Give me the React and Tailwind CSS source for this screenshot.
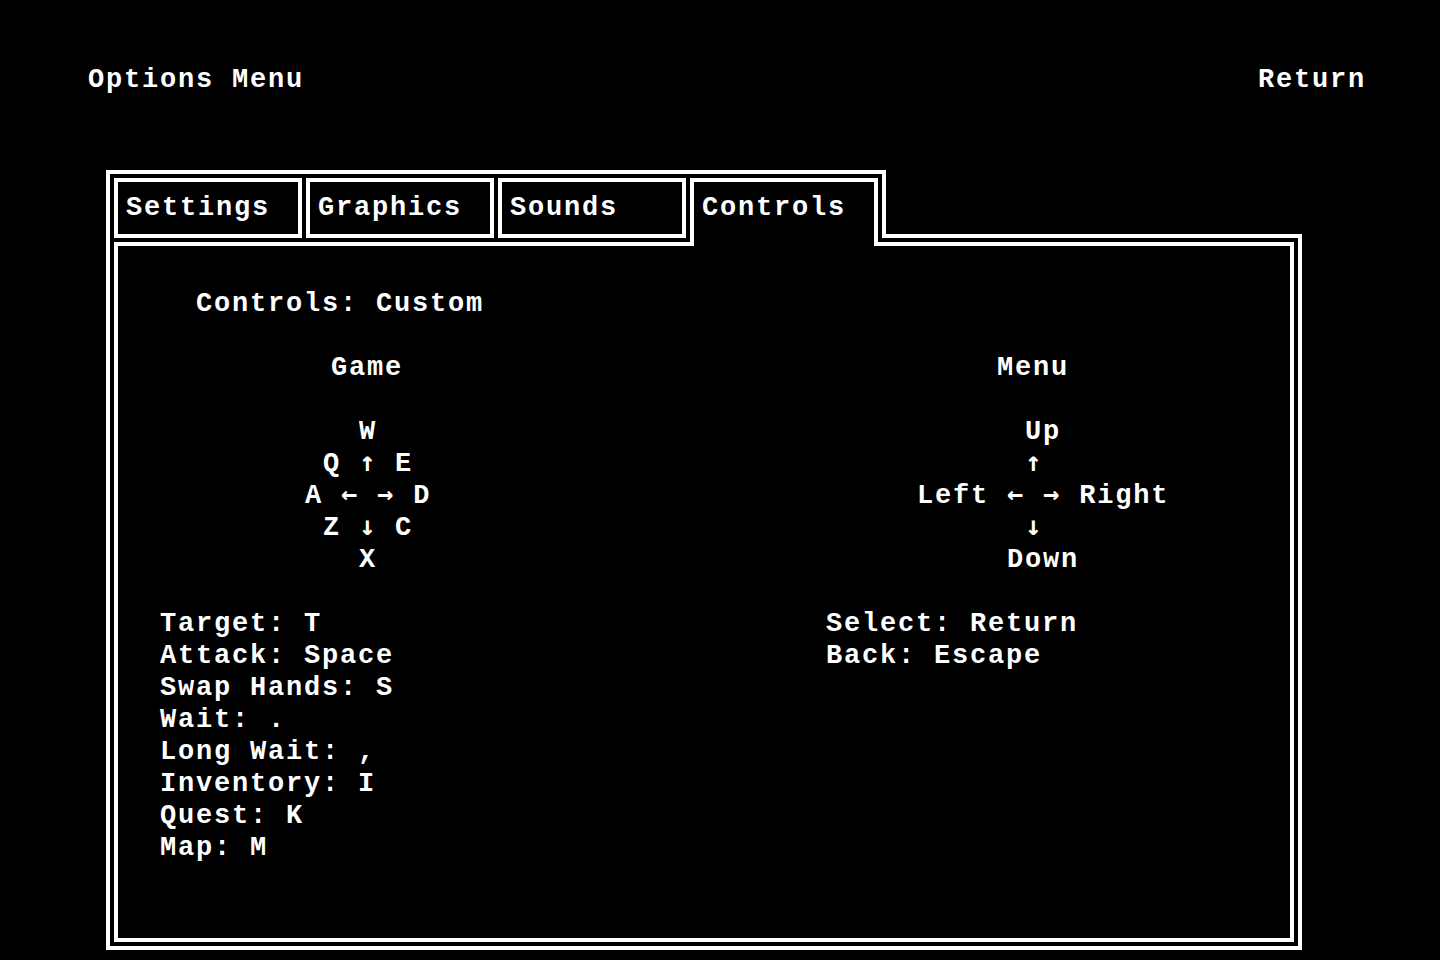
export default function App() {
  const bindings = [
    "Target: T",
    "Attack: Space",
    "Swap Hands: S",
    "Wait: .",
    "Long Wait: ,",
    "Inventory: I",
    "Quest: K",
    "Map: M",
  ]

  // arrows look heavier in DejaVu than in Liberation Mono
  const Arrow = ({ c }) => (
    <span className="leading-none font-['DejaVu_Sans_Mono',monospace]">{c}</span>
  )

  return (
    <div className="w-[1440px] h-[960px] bg-black text-white font-bold text-[27px] leading-[32px] tracking-[1.8px] font-['Liberation_Mono','DejaVu_Sans_Mono',monospace] whitespace-pre overflow-hidden">

      {/* Header */}
      <div className="flex justify-between pt-[64px] pl-[88px] pr-[74px]">
        <span>Options Menu</span>
        <span>Return</span>
      </div>

      {/* Frame */}
      <div className="mt-[74px] ml-[106px] w-[1196px] flex flex-col">

        {/* Tab strip */}
        <div className="flex h-[68px]">
          <div className="w-[780px] h-[68px] border-t-4 border-x-4 border-white pl-1 pt-1">
            <div className="flex gap-1 items-start">
              {["Settings", "Graphics", "Sounds"].map(t => (
                <div key={t} className="w-[188px] h-[60px] border-4 border-white pl-2 pt-[10px]">
                  {t}
                </div>
              ))}
              <div className="relative z-10 w-[188px] h-[68px] border-t-4 border-x-4 border-white bg-black pl-2 pt-[10px]">
                Controls
              </div>
            </div>
          </div>
          <div className="flex-1 h-[68px] border-b-4 border-white" />
        </div>

        {/* Panel */}
        <div className="h-[712px] border-x-4 border-b-4 border-white p-1">
          <div className="h-full border-4 border-white pt-[42px] flex">

            {/* Game column */}
            <div className="w-[708px] flex flex-col">
              <div className="h-8 pl-[78px]">Controls: Custom</div>
              <div className="h-8" />
              <div className="h-8 pl-[213px]">Game</div>
              <div className="h-8" />
              <div className="h-8 pl-[241px]">W</div>
              <div className="h-8 pl-[205px]">Q <Arrow c="↑" /> E</div>
              <div className="h-8 pl-[187px]">A <Arrow c="←" /> <Arrow c="→" /> D</div>
              <div className="h-8 pl-[205px]">Z <Arrow c="↓" /> C</div>
              <div className="h-8 pl-[241px]">X</div>
              <div className="h-8" />
              {bindings.map(b => (
                <div key={b} className="h-8 pl-[42px]">{b}</div>
              ))}
            </div>

            {/* Menu column */}
            <div className="flex-1 flex flex-col pt-16">
              <div className="h-8 pl-[171px]">Menu</div>
              <div className="h-8" />
              <div className="h-8 pl-[199px]">Up</div>
              <div className="h-8 pl-[199px]"><Arrow c="↑" /></div>
              <div className="h-8 pl-[91px]">Left <Arrow c="←" /> <Arrow c="→" /> Right</div>
              <div className="h-8 pl-[199px]"><Arrow c="↓" /></div>
              <div className="h-8 pl-[181px]">Down</div>
              <div className="h-8" />
              <div className="h-8">Select: Return</div>
              <div className="h-8">Back: Escape</div>
            </div>

          </div>
        </div>
      </div>
    </div>
  )
}
